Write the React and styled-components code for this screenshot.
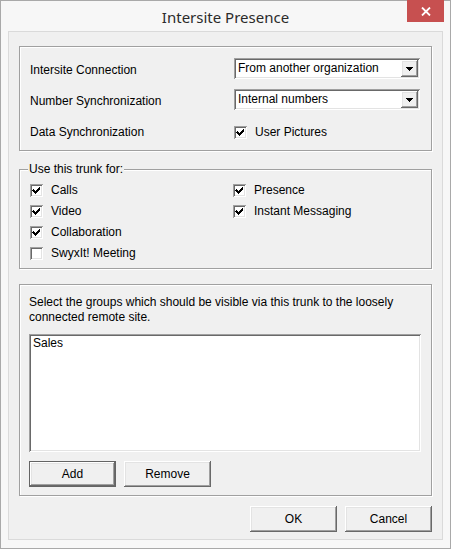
import styled, {createGlobalStyle} from "styled-components";

const GlobalStyle = createGlobalStyle`
    html, body {
        margin: 0;
        padding: 0;
        background: #ffffff;
    }
    body {
        font-family: "Liberation Sans", Arial, sans-serif;
        font-size: 12px;
        line-height: 15px;
        color: #000000;
    }
`;

// classic 3D edges, drawn with inset shadows so they take no layout space
const sunkenEdge = `
    box-shadow: inset 1px 1px 0 #a0a0a0, inset -1px -1px 0 #ffffff, inset 2px 2px 0 #696969, inset -2px -2px 0 #e3e3e3;
`;
const raisedEdge = `
    box-shadow: inset -1px -1px 0 #696969, inset 1px 1px 0 #ffffff, inset -2px -2px 0 #a0a0a0, inset 2px 2px 0 #e3e3e3;
`;
const defaultEdge = `
    box-shadow: inset 0 0 0 1px #646464, inset -2px -2px 0 #696969, inset 2px 2px 0 #ffffff, inset -3px -3px 0 #a0a0a0, inset 3px 3px 0 #e3e3e3;
`;

const Window = styled.div`
    box-sizing: border-box;
    width: 451px;
    height: 549px;
    border: 1px solid #a9a9a9;
    background: #f7f7f7;
    display: flex;
    flex-direction: column;
`;

const TitleBar = styled.div`
    height: 30px;
    flex-shrink: 0;
    display: grid;
    grid-template-columns: 1fr auto 1fr;
    align-items: center;
`;

const Title = styled.div`
    grid-column: 2;
    padding-top: 2px;
    font-family: "Noto Sans", sans-serif;
    font-size: 15px;
    color: #2b2b2b;
    white-space: nowrap;
`;

const CloseButton = styled.div`
    grid-column: 3;
    justify-self: end;
    align-self: start;
    width: 37px;
    height: 22px;
    margin: -1px 6px 0 0;
    background: #c75050;
    display: flex;
    align-items: center;
    justify-content: center;
`;

const Client = styled.div`
    flex: 1;
    margin: 0 7px 8px;
    border: 1px solid #dadada;
    background: #f0f0f0;
    padding: 14px 10px 0;
    display: flex;
    flex-direction: column;
`;

const GroupBox = styled.div`
    border: 1px solid #a0a0a0;
    box-shadow: inset 1px 1px 0 #ffffff, 1px 1px 0 #ffffff;
    padding: ${p => p.$pad};
    margin-top: ${p => p.$top || 0}px;
`;

const FieldGroup = styled.fieldset`
    margin: 11px 0 0;
    padding: 3px 10px 4px;
    min-width: 0;
    border: 1px solid #a0a0a0;
    box-shadow: inset 1px 1px 0 #ffffff, 1px 1px 0 #ffffff;
`;

const Legend = styled.legend`
    margin-left: -2px;
    padding: 0 1px;
    background: #f0f0f0;
    line-height: 15px;
`;

const SettingsGrid = styled.div`
    display: grid;
    grid-template-columns: 204px 186px;
    grid-auto-rows: 21px;
    row-gap: 10px;
    align-items: center;
`;

const Label = styled.span`
    padding-top: 3px;
    white-space: nowrap;
`;

const Combo = styled.div`
    box-sizing: border-box;
    height: 21px;
    padding: 2px;
    background: #ffffff;
    display: flex;
    align-items: center;
    ${sunkenEdge}
`;

const ComboText = styled.span`
    flex: 1;
    padding-left: 2px;
    white-space: nowrap;
`;

const DropButton = styled.span`
    width: 17px;
    height: 17px;
    background: #f0f0f0;
    display: flex;
    align-items: center;
    justify-content: center;
    ${raisedEdge}
`;

const Columns = styled.div`
    display: grid;
    grid-template-columns: 203px 1fr;
`;

const CheckColumn = styled.div`
    display: flex;
    flex-direction: column;
`;

const CheckRow = styled.label`
    height: ${p => p.$h || 21}px;
    display: flex;
    align-items: center;
    padding-top: ${p => p.$shift || 0}px;
    white-space: nowrap;
`;

const Box = styled.span`
    width: 13px;
    height: 13px;
    flex-shrink: 0;
    margin-right: 8px;
    background: #ffffff;
    ${sunkenEdge}
    svg {
        display: block;
    }
`;

const Prompt = styled.p`
    margin: 0;
    line-height: 15px;
`;

const ListBox = styled.div`
    box-sizing: border-box;
    height: 118px;
    margin-top: 9px;
    padding: 2px 4px;
    background: #ffffff;
    ${sunkenEdge}
`;

const ButtonRow = styled.div`
    display: flex;
    gap: 8px;
    justify-content: ${p => p.$end ? "flex-end" : "flex-start"};
    margin-top: ${p => p.$top}px;
`;

const Button = styled.button`
    width: 87px;
    height: 26px;
    padding: 0;
    border: 0;
    background: #f0f0f0;
    color: #000000;
    font-family: "Liberation Sans", Arial, sans-serif;
    font-size: 12px;
    ${p => p.$default ? defaultEdge : raisedEdge}
`;

const Check = ({checked}) => (
    <Box>
        {checked && (
            <svg width="13" height="13" viewBox="0 0 13 13" shapeRendering="crispEdges">
                <path d="M3 5h1v1h1v1h1v-1h1v-1h1v-1h1v-1h1v3h-1v1h-1v1h-1v1h-1v1h-1v-1h-1v-1h-1v-1h-1z" fill="#000" />
            </svg>
        )}
    </Box>
);

const CheckItem = ({checked, children, h, shift}) => (
    <CheckRow $h={h} $shift={shift}>
        <Check checked={checked} />
        {children}
    </CheckRow>
);

const Dropdown = ({value}) => (
    <Combo>
        <ComboText>{value}</ComboText>
        <DropButton>
            <svg width="7" height="4" viewBox="0 0 7 4" shapeRendering="crispEdges">
                <path d="M0 0h7v1h-1v1h-1v1h-1v1h-1v-1h-1v-1h-1v-1h-1z" fill="#000" />
            </svg>
        </DropButton>
    </Combo>
);

const trunkLeft = [
    {label: "Calls", checked: true},
    {label: "Video", checked: true},
    {label: "Collaboration", checked: true},
    {label: "SwyxIt! Meeting", checked: false},
];

const trunkRight = [
    {label: "Presence", checked: true},
    {label: "Instant Messaging", checked: true},
];

export default function App() {
    return (
        <>
            <GlobalStyle />
            <Window>
                <TitleBar>
                    <Title>Intersite Presence</Title>
                    <CloseButton>
                        <svg width="10" height="9" viewBox="0 0 10 9">
                            <path d="M1 0.5L9 8.5M9 0.5L1 8.5" stroke="#fff" strokeWidth="1.8" />
                        </svg>
                    </CloseButton>
                </TitleBar>
                <Client>
                    <GroupBox $pad="11px 9px 9px 10px">
                        <SettingsGrid>
                            <Label>Intersite Connection</Label>
                            <Dropdown value="From another organization" />
                            <Label>Number Synchronization</Label>
                            <Dropdown value="Internal numbers" />
                            <Label>Data Synchronization</Label>
                            <CheckItem checked shift={4}>User Pictures</CheckItem>
                        </SettingsGrid>
                    </GroupBox>

                    <FieldGroup>
                        <Legend>Use this trunk for:</Legend>
                        <Columns>
                            <CheckColumn>
                                {trunkLeft.map(item => (
                                    <CheckItem key={item.label} checked={item.checked}>{item.label}</CheckItem>
                                ))}
                            </CheckColumn>
                            <CheckColumn>
                                {trunkRight.map(item => (
                                    <CheckItem key={item.label} checked={item.checked}>{item.label}</CheckItem>
                                ))}
                            </CheckColumn>
                        </Columns>
                    </FieldGroup>

                    <GroupBox $top={15} $pad="10px 10px 8px 9px">
                        <Prompt>Select the groups which should be visible via this trunk to the loosely connected remote site.</Prompt>
                        <ListBox>Sales</ListBox>
                        <ButtonRow $top={9}>
                            <Button $default>Add</Button>
                            <Button>Remove</Button>
                        </ButtonRow>
                    </GroupBox>

                    <ButtonRow $end $top={10}>
                        <Button>OK</Button>
                        <Button>Cancel</Button>
                    </ButtonRow>
                </Client>
            </Window>
        </>
    );
}
